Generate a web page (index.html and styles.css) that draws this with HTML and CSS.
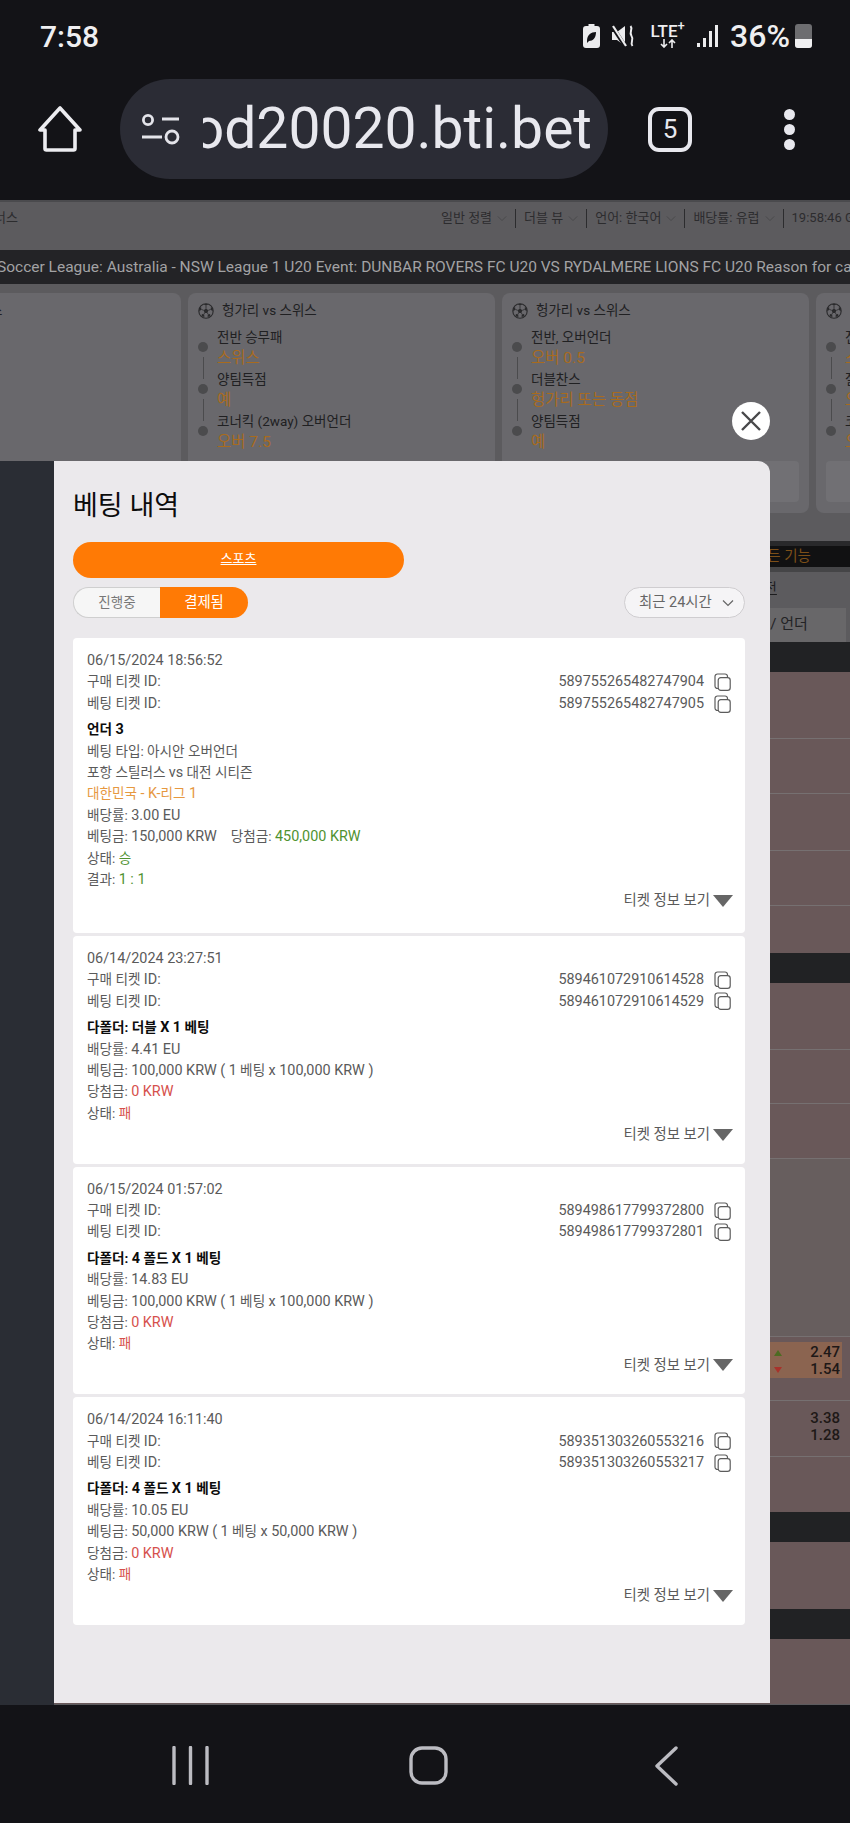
FILE: index.html
```html
<!DOCTYPE html>
<html lang="ko">
<head>
  <meta charset="UTF-8">
  <meta name="viewport" content="width=device-width, initial-scale=1.0">
  <title>베팅 내역</title>
  <link rel="stylesheet" href="styles.css">
</head>
<body>
  <svg class="icon-defs" aria-hidden="true">
    <symbol id="i-copy" viewBox="0 0 17 18">
      <path d="M5 15.5H3.5A2.5 2.5 0 0 1 1 13V3.5A2.5 2.5 0 0 1 3.5 1H11A2.5 2.5 0 0 1 13.5 3.5V5" fill="none" stroke="#5c5c5c" stroke-width="1.2"/>
      <rect x="4.2" y="4.6" width="12" height="12.8" rx="2.6" fill="#fff" stroke="#5c5c5c" stroke-width="1.2"/>
    </symbol>
    <symbol id="i-ball" viewBox="0 0 16 16">
      <circle cx="8" cy="8" r="7.2" fill="none" stroke="#2a2a2c" stroke-width="1.1"/>
      <path d="M8 5.600l2.300 1.700-.9 2.700H6.600l-.9-2.700z" fill="#2a2a2c"/>
      <path d="M5.600 1.400L8 2.600l2.400-1.200L8 .8zM14.800 5.400l-.2 3-1.900-2 .2-2.400zM12.400 13.200l-2.800.9.2-2.500 2.300-.7zM3.600 13.200l2.800.9-.2-2.500-2.300-.7zM1.200 5.400l.2 3 1.900-2-.2-2.400z" fill="#2a2a2c"/>
      <path d="M8 5.600V2.600M10.300 7.300l2.400-.9M9.400 10l.8 1.400M6.600 10l-.8 1.400M5.700 7.300l-2.400-.9" stroke="#2a2a2c" stroke-width=".8"/>
    </symbol>
    <symbol id="i-chev" viewBox="0 0 12 8">
      <path d="M1 1.500l5 5 5-5" fill="none" stroke="currentColor" stroke-width="1.2"/>
    </symbol>
  </svg>

  <div class="phone">
    <header class="statusbar">
      <span class="clock">7:58</span>
      <div class="status-icons">
        <svg class="st-saver" width="17" height="24" viewBox="0 0 17 24"><path d="M5.500 0h6v2h2.500a3 3 0 0 1 3 3v16a3 3 0 0 1-3 3h-11a3 3 0 0 1-3-3V5a3 3 0 0 1 3-3h2.500z" fill="#ececee"/><path d="M4 17c0-6 4-9 9-9 0 6-3 9-7 9l-2 2z" fill="#131317"/></svg>
        <svg class="st-mute" width="23" height="24" viewBox="0 0 23 24"><path d="M0 8h5l8-6v20l-8-6H0z" fill="#ececee"/><path d="M0 2l13 20" stroke="#131317" stroke-width="4"/><path d="M1 2l13 20" stroke="#ececee" stroke-width="2.200"/><path d="M18.500 2c3 3.500-2 6 1 10s-2 6 1 10" fill="none" stroke="#ececee" stroke-width="2"/></svg>
        <div class="st-lte">
          <span class="lte-text">LTE<sup>+</sup></span>
          <svg width="16" height="9" viewBox="0 0 16 9"><path d="M4 0v8M1 5l3 3 3-3M12 9V1M9 4l3-3 3 3" fill="none" stroke="#ececee" stroke-width="1.600"/></svg>
        </div>
        <svg class="st-signal" width="21" height="24" viewBox="0 0 21 24"><path d="M0 19h3v4H0zM6 14h3v9H6zM12 7h3v16h-3zM18 1h3v22h-3z" fill="#ececee"/></svg>
        <span class="st-percent">36%</span>
        <div class="st-battery"><i></i></div>
      </div>
    </header>

    <nav class="toolbar">
      <svg class="home-icon" width="44" height="46" viewBox="0 0 44 46"><path d="M22 2L2 24h5v18.500a1.500 1.500 0 0 0 1.500 1.500h27a1.500 1.500 0 0 0 1.500-1.500V24h5z" fill="none" stroke="#ececf0" stroke-width="3.600" stroke-linejoin="round"/></svg>
      <div class="url-pill">
        <svg width="40" height="31" viewBox="0 0 40 31"><g fill="none" stroke="#e4e4ea" stroke-width="2.800"><circle cx="7" cy="6" r="4.600"/><path d="M21 5h17M1 23h20"/><circle cx="31" cy="23" r="6"/></g></svg>
        <div class="url-clip"><span>od20020.bti.bet</span></div>
      </div>
      <div class="tab-count">5</div>
      <div class="more-dots"><i></i><i></i><i></i></div>
    </nav>

    <main class="site">
      <div class="site-head">
        <span class="head-left">너스</span>
        <span>일반 정렬</span><svg class="head-chev"><use href="#i-chev"/></svg><b></b>
        <span>더블 뷰</span><svg class="head-chev"><use href="#i-chev"/></svg><b></b>
        <span>언어: 한국어</span><svg class="head-chev"><use href="#i-chev"/></svg><b></b>
        <span>배당률: 유럽</span><svg class="head-chev"><use href="#i-chev"/></svg><b></b>
        <span>19:58:46 GMT</span>
      </div>
      <div class="ticker">Soccer League: Australia - NSW League 1 U20 Event: DUNBAR ROVERS FC U20 VS RYDALMERE LIONS FC U20 Reason for cancellation</div>

      <div class="match-row">
        <div class="match-card first-card"><div class="match-title">스</div></div>

        <div class="match-card">
          <div class="match-title"><svg><use href="#i-ball"/></svg>헝가리 vs 스위스</div>
          <div class="legs">
            <div class="rail"><i></i><u></u><i></i><u></u><i></i></div>
            <div>
              <div class="leg-name">전반 승무패</div><div class="leg-pick">스위스</div>
              <div class="leg-name">양팀득점</div><div class="leg-pick">예</div>
              <div class="leg-name">코너킥 (2way) 오버언더</div><div class="leg-pick">오버 7.5</div>
            </div>
          </div>
          <div class="match-btn"></div>
        </div>

        <div class="match-card">
          <div class="match-title"><svg><use href="#i-ball"/></svg>헝가리 vs 스위스</div>
          <div class="legs">
            <div class="rail"><i></i><u></u><i></i><u></u><i></i></div>
            <div>
              <div class="leg-name">전반, 오버언더</div><div class="leg-pick">오버 0.5</div>
              <div class="leg-name">더블찬스</div><div class="leg-pick">헝가리 또는 동점</div>
              <div class="leg-name">양팀득점</div><div class="leg-pick">예</div>
            </div>
          </div>
          <div class="match-btn"></div>
        </div>

        <div class="match-card">
          <div class="match-title"><svg><use href="#i-ball"/></svg>헝가리 vs 스위스</div>
          <div class="legs">
            <div class="rail"><i></i><u></u><i></i><u></u><i></i></div>
            <div>
              <div class="leg-name">전반 승무패</div><div class="leg-pick">스위스</div>
              <div class="leg-name">절반</div><div class="leg-pick">오버</div>
              <div class="leg-name">코너킥</div><div class="leg-pick">오버</div>
            </div>
          </div>
          <div class="match-btn"></div>
        </div>
      </div>

      <div class="feature-bar">모든 기능</div>
      <div class="tab-row"><span>전</span></div>
      <div class="odds-head"><div>오버 / 언더</div></div>

      <div class="section-bar"></div>
      <div class="row h66"></div>
      <div class="row h55"></div>
      <div class="row h57"></div>
      <div class="row h55"></div>
      <div class="row h48"></div>

      <div class="section-bar"></div>
      <div class="row h66"></div>
      <div class="row h54"></div>
      <div class="row h55"></div>
      <div class="row h178 grey"></div>
      <div class="row h64">
        <div class="odds-cell hot">
          <div class="odds-line"><s class="up"></s><span>2.47</span></div>
          <div class="odds-line"><s class="down"></s><span>1.54</span></div>
        </div>
      </div>
      <div class="row h56">
        <div class="odds-cell">
          <div class="odds-line"><span>3.38</span></div>
          <div class="odds-line"><span>1.28</span></div>
        </div>
      </div>
      <div class="row h56"></div>

      <div class="section-bar"></div>
      <div class="row h67"></div>
      <div class="section-bar"></div>
      <div class="row h65"></div>

      <!-- modal sits over the dimmed site -->
      <div class="overlay">
        <div class="side-strip"></div>
        <section class="modal">
          <h1 class="modal-title">베팅 내역</h1>
          <a class="sports-btn" href="#">스포츠</a>

          <div class="filters">
            <div class="segment">
              <span class="seg-off">진행중</span>
              <span class="seg-on">결제됨</span>
            </div>
            <div class="range">최근 24시간<svg><use href="#i-chev"/></svg></div>
          </div>

          <article class="ticket">
            <div class="num">06/15/2024 18:56:52</div>
            <div class="id-row"><span>구매 티켓 <span class="num">ID:</span></span><span class="id-val num">589755265482747904<svg><use href="#i-copy"/></svg></span></div>
            <div class="id-row"><span>베팅 티켓 <span class="num">ID:</span></span><span class="id-val num">589755265482747905<svg><use href="#i-copy"/></svg></span></div>
            <div class="bet-name">언더 <span class="num">3</span></div>
            <div>베팅 타입: 아시안 오버언더</div>
            <div>포항 스틸러스 <span class="num">vs</span> 대전 시티즌</div>
            <div class="league">대한민국 <span class="num">- K-</span>리그 <span class="num">1</span></div>
            <div>배당률: <span class="num">3.00 EU</span></div>
            <div class="stake-row"><span>베팅금: <span class="num">150,000 KRW</span></span><span>당첨금: <em class="won num">450,000 KRW</em></span></div>
            <div>상태: <em class="won">승</em></div>
            <div>결과: <em class="won num">1 : 1</em></div>
            <div class="more">티켓 정보 보기<i></i></div>
          </article>

          <article class="ticket">
            <div class="num">06/14/2024 23:27:51</div>
            <div class="id-row"><span>구매 티켓 <span class="num">ID:</span></span><span class="id-val num">589461072910614528<svg><use href="#i-copy"/></svg></span></div>
            <div class="id-row"><span>베팅 티켓 <span class="num">ID:</span></span><span class="id-val num">589461072910614529<svg><use href="#i-copy"/></svg></span></div>
            <div class="bet-name">다폴더: 더블 <span class="num">X 1</span> 베팅</div>
            <div>배당률: <span class="num">4.41 EU</span></div>
            <div>베팅금: <span class="num">100,000 KRW (</span> <span class="num">1</span> 베팅 <span class="num">x 100,000 KRW )</span></div>
            <div>당첨금: <em class="lost num">0 KRW</em></div>
            <div>상태: <em class="lost">패</em></div>
            <div class="more">티켓 정보 보기<i></i></div>
          </article>

          <article class="ticket">
            <div class="num">06/15/2024 01:57:02</div>
            <div class="id-row"><span>구매 티켓 <span class="num">ID:</span></span><span class="id-val num">589498617799372800<svg><use href="#i-copy"/></svg></span></div>
            <div class="id-row"><span>베팅 티켓 <span class="num">ID:</span></span><span class="id-val num">589498617799372801<svg><use href="#i-copy"/></svg></span></div>
            <div class="bet-name">다폴더: <span class="num">4</span> 폴드 <span class="num">X 1</span> 베팅</div>
            <div>배당률: <span class="num">14.83 EU</span></div>
            <div>베팅금: <span class="num">100,000 KRW (</span> <span class="num">1</span> 베팅 <span class="num">x 100,000 KRW )</span></div>
            <div>당첨금: <em class="lost num">0 KRW</em></div>
            <div>상태: <em class="lost">패</em></div>
            <div class="more">티켓 정보 보기<i></i></div>
          </article>

          <article class="ticket">
            <div class="num">06/14/2024 16:11:40</div>
            <div class="id-row"><span>구매 티켓 <span class="num">ID:</span></span><span class="id-val num">589351303260553216<svg><use href="#i-copy"/></svg></span></div>
            <div class="id-row"><span>베팅 티켓 <span class="num">ID:</span></span><span class="id-val num">589351303260553217<svg><use href="#i-copy"/></svg></span></div>
            <div class="bet-name">다폴더: <span class="num">4</span> 폴드 <span class="num">X 1</span> 베팅</div>
            <div>배당률: <span class="num">10.05 EU</span></div>
            <div>베팅금: <span class="num">50,000 KRW (</span> <span class="num">1</span> 베팅 <span class="num">x 50,000 KRW )</span></div>
            <div>당첨금: <em class="lost num">0 KRW</em></div>
            <div>상태: <em class="lost">패</em></div>
            <div class="more">티켓 정보 보기<i></i></div>
          </article>
        </section>
      </div>

      <button class="close-btn" type="button" aria-label="닫기">
        <svg width="22" height="22" viewBox="0 0 22 22"><path d="M2 2l18 18M20 2L2 20" stroke="#48484a" stroke-width="2.400"/></svg>
      </button>
    </main>

    <footer class="navbar">
      <svg width="37" height="39" viewBox="0 0 37 39"><path d="M2 1.500v36M18.500 1.500v36M35 1.500v36" stroke="#bcbcc2" stroke-width="3.400" stroke-linecap="round"/></svg>
      <svg class="nav-home" width="39" height="39" viewBox="0 0 39 39"><rect x="2" y="2" width="35" height="35" rx="11" fill="none" stroke="#bcbcc2" stroke-width="3.400"/></svg>
      <svg width="24" height="40" viewBox="0 0 24 40"><path d="M22 2L3 20l19 18" fill="none" stroke="#bcbcc2" stroke-width="3.400" stroke-linecap="round" stroke-linejoin="round"/></svg>
    </footer>
  </div>
</body>
</html>
```

FILE: styles.css
```css
body {
  margin: 0;
  font-family: Roboto, "Noto Sans CJK KR", sans-serif;
  background-color: #131317;
}
.icon-defs {
  display: none;
}
.phone {
  width: 850px;
  height: 1823px;
  display: flex;
  flex-direction: column;
  overflow: hidden;
}

/* phone status bar */
.statusbar {
  height: 58px;
  padding: 14px 38px 0 40px;
  box-sizing: border-box;
  display: flex;
  align-items: center;
  justify-content: space-between;
  color: #efeff1;
}
.clock {
  font-size: 30px;
  font-weight: 500;
}
.status-icons {
  display: flex;
  align-items: center;
}
.st-mute {
  margin-left: 12px;
}
.st-lte {
  margin-left: 12px;
  width: 41px;
  display: flex;
  flex-direction: column;
  align-items: center;
  line-height: 15px;
}
.lte-text {
  font-size: 17px;
  font-weight: 500;
}
.lte-text sup {
  font-size: 13px;
  line-height: 0;
}
.st-signal {
  margin-left: 9px;
}
.st-percent {
  margin-left: 12px;
  font-size: 32px;
  font-weight: 500;
}
.st-battery {
  margin-left: 5px;
  width: 17px;
  height: 24px;
  border-radius: 3px;
  background-color: #6d6d70;
  position: relative;
  overflow: hidden;
}
.st-battery i {
  position: absolute;
  left: 0;
  right: 0;
  bottom: 0;
  height: 9px;
  background-color: #efeff1;
}

/* browser toolbar */
.toolbar {
  height: 142px;
  padding-left: 38px;
  display: flex;
  align-items: center;
  color: #e8e8ee;
}
.home-icon {
  flex: none;
}
.url-pill {
  margin-left: 38px;
  width: 488px;
  height: 100px;
  padding-left: 21px;
  box-sizing: border-box;
  border-radius: 50px;
  background-color: #2b2c35;
  display: flex;
  align-items: center;
}
.url-clip {
  margin-left: 22px;
  width: 389px;
  overflow: hidden;
  display: flex;
  justify-content: flex-end;
  font-size: 57px;
  line-height: 66px;
  white-space: nowrap;
}
.tab-count {
  margin-left: 40px;
  width: 44px;
  height: 45px;
  box-sizing: border-box;
  border: 4px solid #e8e8ee;
  border-radius: 11px;
  font-size: 26px;
  line-height: 36px;
  text-align: center;
}
.more-dots {
  margin-left: 92px;
  display: flex;
  flex-direction: column;
  gap: 4px;
}
.more-dots i {
  width: 11px;
  height: 11px;
  border-radius: 50%;
  background-color: #e8e8ee;
}

/* dimmed site behind the modal */
.site {
  position: relative;
  height: 1505px;
  overflow: hidden;
  background-color: #5c5b5e;
  border-top: 2px solid #4a4a4d;
  box-sizing: border-box;
}
.site-head {
  height: 48px;
  display: flex;
  align-items: flex-start;
  padding-top: 7px;
  box-sizing: border-box;
  font-size: 13px;
  line-height: 17px;
  color: #2c2c2e;
  white-space: nowrap;
}
.head-left {
  flex: none;
  width: 447px;
  margin-left: -6px;
}
.head-chev {
  flex: none;
  width: 10px;
  height: 7px;
  margin: 6px 8px 0 5px;
  color: #4a4a4c;
}
.site-head b {
  flex: none;
  width: 1px;
  height: 19px;
  margin-right: 8px;
  background-color: #2c2c2e;
}
.ticker {
  height: 34px;
  background-color: #232326;
  color: #a2a2a4;
  font-size: 15.5px;
  line-height: 34px;
  white-space: nowrap;
  overflow: hidden;
  text-indent: -3px;
}
.match-row {
  height: 257px;
  padding-top: 9px;
  box-sizing: border-box;
  display: flex;
  gap: 7px;
}
.match-card {
  flex: none;
  width: 307px;
  height: 220px;
  padding: 9px 10px 0;
  box-sizing: border-box;
  border-radius: 8px;
  background-color: #69686c;
  color: #202022;
  font-size: 13.5px;
}
.first-card {
  width: 181px;
  padding: 9px 0 0;
  border-radius: 0 8px 8px 0;
}
.first-card .match-title {
  margin-left: -10px;
}
.match-title {
  height: 17px;
  line-height: 17px;
  display: flex;
  align-items: center;
  gap: 8px;
  white-space: nowrap;
}
.match-title svg {
  width: 16px;
  height: 16px;
}
.legs {
  margin-top: 8px;
  display: flex;
}
.rail {
  width: 10px;
  margin-right: 9px;
  padding-top: 15px;
  display: flex;
  flex-direction: column;
  align-items: center;
  gap: 5px;
}
.rail i {
  width: 10px;
  height: 10px;
  border-radius: 50%;
  background-color: #4b4b4d;
}
.rail u {
  width: 1px;
  height: 22px;
  background-color: #4b4b4d;
}
.leg-name {
  line-height: 21px;
  white-space: nowrap;
}
.leg-pick {
  line-height: 21px;
  font-size: 15.5px;
  color: #a86b1e;
  white-space: nowrap;
}
.match-btn {
  margin-top: 8px;
  height: 41px;
  border-radius: 4px;
  background-color: #717074;
}
.feature-bar {
  height: 31px;
  box-sizing: border-box;
  border-top: 5px solid #29292b;
  border-bottom: 5px solid #454547;
  background-color: #111112;
  color: #7d4f18;
  font-size: 14.5px;
  line-height: 21px;
  padding-left: 754px;
}
.tab-row {
  height: 36px;
  padding-left: 764px;
  font-size: 14px;
  line-height: 32px;
  color: #1c1c1e;
  text-decoration: underline;
}
.odds-head {
  height: 34px;
}
.odds-head div {
  width: 146px;
  height: 34px;
  margin-left: 700px;
  padding-left: 39px;
  box-sizing: border-box;
  background-color: #686769;
  font-size: 15px;
  line-height: 32px;
  color: #232325;
}
.section-bar {
  height: 30px;
  background-color: #212224;
}
.row {
  box-sizing: border-box;
  background-color: #695859;
  border-top: 1px solid #767071;
}
.section-bar + .row {
  border-top: none;
}
.h48 { height: 48px; }
.h54 { height: 54px; }
.h55 { height: 55px; }
.h56 { height: 56px; }
.h57 { height: 57px; }
.h64 { height: 64px; }
.h65 { height: 65px; }
.h66 { height: 66px; }
.h67 { height: 67px; }
.h178 { height: 178px; }
.grey {
  background-color: #675e5e;
}
.odds-cell {
  width: 72px;
  height: 36px;
  margin: 5px 0 0 770px;
  padding: 2px 2px 0 4px;
  box-sizing: border-box;
  font-size: 15px;
  font-weight: 500;
  line-height: 17px;
  color: #1e1817;
}
.row.h56 .odds-cell {
  margin-top: 7px;
}
.odds-cell.hot {
  background-color: #8b6450;
}
.odds-line {
  display: flex;
  align-items: center;
  justify-content: flex-end;
}
.odds-line s {
  width: 0;
  height: 0;
  margin-right: auto;
  border-left: 4px solid transparent;
  border-right: 4px solid transparent;
}
.odds-line s.up {
  border-bottom: 6px solid #4d6b22;
}
.odds-line s.down {
  border-top: 6px solid #a8322b;
}

/* modal */
.overlay {
  position: absolute;
  top: 259px;
  left: 0;
  right: 0;
  bottom: 2px;
  display: flex;
}
.side-strip {
  flex: none;
  width: 54px;
  margin-bottom: -2px;
  background-color: #2a2d34;
}
.modal {
  flex: none;
  width: 716px;
  padding: 0 25px 0 19px;
  box-sizing: border-box;
  background-color: #ebe9ec;
  border-radius: 0 12px 0 0;
  color: #5a5a5a;
  font-size: 14.4px;
  line-height: 21.4px;
}
.modal-title {
  margin: 28px 0 19px;
  font-size: 27px;
  line-height: 34px;
  font-weight: 400;
  color: #0c0c0c;
}
.sports-btn {
  display: block;
  width: 331px;
  height: 36px;
  border-radius: 18px;
  background-color: #ff7a05;
  color: #fff;
  font-size: 13px;
  line-height: 34px;
  text-align: center;
}
.filters {
  margin: 9px 0 20px;
  height: 31px;
  display: flex;
  justify-content: space-between;
}
.segment {
  display: flex;
  font-size: 14.4px;
  line-height: 29px;
  text-align: center;
}
.seg-off {
  width: 87px;
  box-sizing: border-box;
  border: 1px solid #cfcfcf;
  border-right: none;
  border-radius: 16px 0 0 16px;
  background-color: #f6f6f6;
  color: #777;
  font-size: 13.5px;
}
.seg-on {
  width: 88px;
  border-radius: 0 16px 16px 0;
  background-color: #ff7a05;
  color: #fff;
  line-height: 31px;
}
.range {
  width: 121px;
  padding-left: 14px;
  box-sizing: border-box;
  border: 1px solid #cfcdd0;
  border-radius: 16px;
  background-color: #f5f4f6;
  color: #666;
  line-height: 29px;
  display: flex;
  align-items: center;
}
.range svg {
  width: 12px;
  height: 8px;
  margin-left: 10px;
}
.ticket {
  margin-bottom: 3px;
  padding: 12px 14px 18px;
  border-radius: 4px;
  background-color: #fff;
  font-size: 13.6px;
}
.ticket:first-of-type {
  padding-bottom: 21px;
}
.ticket em {
  font-style: normal;
}
.num {
  font-size: 14.4px;
}
.id-row {
  display: flex;
  justify-content: space-between;
}
.id-val {
  display: flex;
  align-items: center;
}
.id-val svg {
  width: 17px;
  height: 18px;
  margin-left: 10px;
}
.bet-name {
  margin-top: 5px;
  font-weight: 700;
  color: #0c0c0c;
}
.league {
  color: #e6983f;
}
.stake-row {
  display: flex;
  gap: 14px;
}
.won {
  color: #4f9230;
}
.lost {
  color: #d6504c;
}
.more {
  display: flex;
  align-items: center;
  justify-content: flex-end;
  gap: 3px;
  margin-right: -2px;
  font-size: 14.4px;
}
.more i {
  width: 0;
  height: 0;
  border-left: 10px solid transparent;
  border-right: 10px solid transparent;
  border-top: 12px solid #666;
}
.close-btn {
  position: absolute;
  left: 732px;
  top: 200px;
  width: 38px;
  height: 38px;
  padding: 0;
  border: none;
  border-radius: 50%;
  background-color: #fff;
  display: flex;
  align-items: center;
  justify-content: center;
}

/* phone nav bar */
.navbar {
  flex: 1;
  padding: 41px 172px 0;
  box-sizing: border-box;
  display: flex;
  align-items: flex-start;
  justify-content: space-between;
}
.nav-home {
  margin-right: 7px;
}
```
